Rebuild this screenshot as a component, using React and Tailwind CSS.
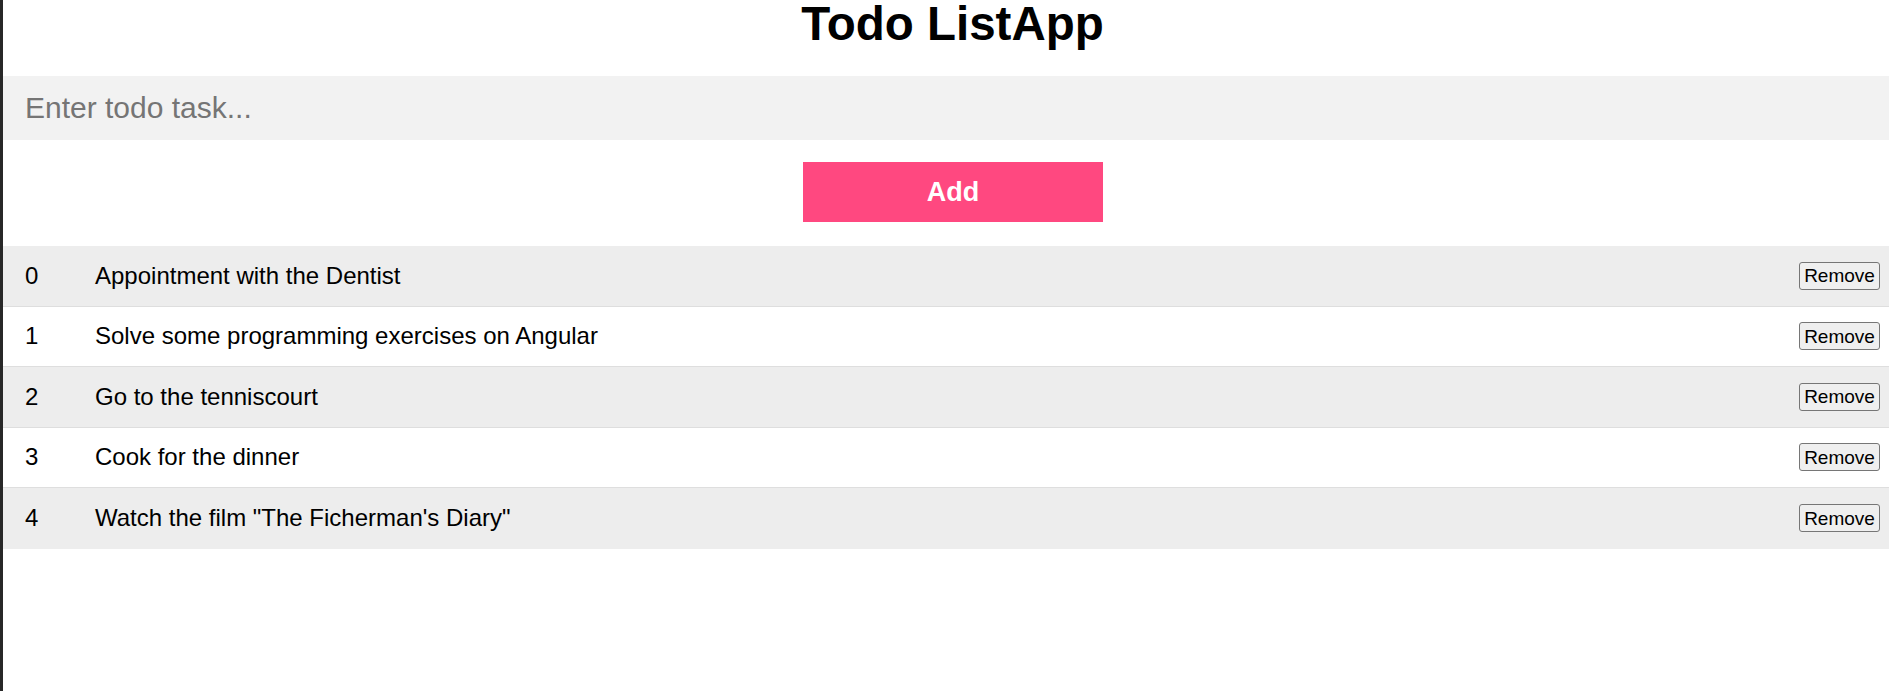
import React, { useState } from 'react';

const initialTodos = [
    "Appointment with the Dentist",
    "Solve some programming exercises on Angular",
    "Go to the tenniscourt",
    "Cook for the dinner",
    'Watch the film "The Ficherman\'s Diary"',
];

export default function App() {
    const [todos, setTodos] = useState(initialTodos);
    const [task, setTask] = useState("");

    const handleAdd = () => {
        if (!task.trim()) return;
        setTodos(prev => [...prev, task]);
        setTask("");
    };

    const handleRemove = (idx) => {
        setTodos(prev => prev.filter((_, i) => i !== idx));
    };

    return (
        <div className="flex min-h-screen bg-white font-['Liberation_Sans',Arial,sans-serif] text-black">
            <div className="w-[3px] shrink-0 bg-[#282828]" />
            <div className="flex-1 min-w-0">
                <h1 className="text-center text-[47.5px] font-bold leading-[48px] pb-[28px] pl-[13px]">
                    Todo ListApp
                </h1>

                <input
                    type="text"
                    placeholder="Enter todo task..."
                    value={task}
                    onChange={(e) => setTask(e.target.value)}
                    className="block w-full h-[64px] bg-[#f2f2f2] pl-[22px] text-[30px] outline-none placeholder:text-[#757575]"
                />

                <div className="flex justify-center pl-[14px] pt-[22px] pb-[24px]">
                    <button
                        onClick={handleAdd}
                        className="w-[300px] h-[60px] bg-[#ff4880] text-white text-[27px] font-bold"
                    >
                        Add
                    </button>
                </div>

                <ul>
                    {todos.map((t, i) => (
                        <li
                            key={i}
                            className={`flex items-center h-[60.5px] text-[24px] ${i % 2 === 0 ? 'bg-[#ededed]' : 'bg-white'} ${i < todos.length - 1 ? 'border-b border-[#dedede]' : ''}`}
                        >
                            <span className="w-[92px] shrink-0 pl-[22px]">{i}</span>
                            <span className="flex-1 min-w-0">{t}</span>
                            <button
                                onClick={() => handleRemove(i)}
                                className="mr-[9px] w-[81px] h-[28px] flex items-center justify-center bg-[#efefef] border border-[#767676] rounded-[3px] text-[19px] leading-none"
                            >
                                Remove
                            </button>
                        </li>
                    ))}
                </ul>
            </div>
        </div>
    );
}
